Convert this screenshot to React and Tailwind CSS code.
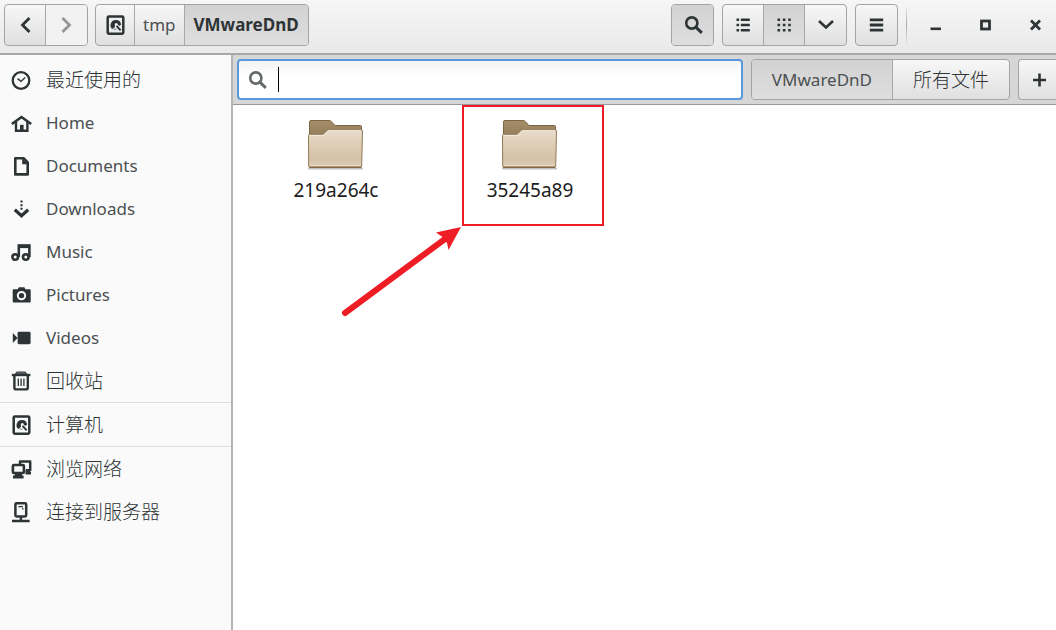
import React, { useState } from "react";

const Icon = ({ children, size = 24, className = "" }) => (
  <svg
    width={size}
    height={size}
    viewBox="0 0 24 24"
    fill="none"
    stroke="currentColor"
    strokeWidth="2.6"
    aria-hidden="true"
    className={`shrink-0 ${className}`}
  >
    {children}
  </svg>
);

const ClockIcon = () => (
  <Icon>
    <circle cx="12" cy="12.5" r="8.3" strokeWidth="2.3" />
    <path d="M8.6 10.6 12 13.4 16.2 9.6" strokeWidth="1.4" />
  </Icon>
);

const HomeIcon = () => (
  <Icon>
    <path d="M2.8 13 12.5 6l9.7 7" strokeWidth="2.6" />
    <path d="M7 11v8.7h11.4V11" strokeWidth="2.4" />
    <path d="M11 20v-6.2h3.6V20z" fill="currentColor" stroke="none" />
  </Icon>
);

const DocumentIcon = () => (
  <Icon>
    <path d="M6.3 4.2h8.2l4.2 4.2v12H6.3z" strokeLinejoin="round" />
    <path d="M13.2 4v6.2H19z" fill="currentColor" stroke="none" />
  </Icon>
);

const DownloadIcon = () => (
  <Icon>
    <path d="M12.5 3.6v10" strokeWidth="2.2" strokeDasharray="2 1.6" />
    <path d="M5.8 12.8l6.7 6 6.7-6" strokeWidth="3.2" />
  </Icon>
);

const MusicIcon = () => (
  <Icon>
    <circle cx="6.2" cy="17" r="2.8" />
    <circle cx="16.8" cy="17" r="2.8" />
    <path d="M9.8 17V5.6h10.6V17" />
    <path d="M9 6.4h12" strokeWidth="3.4" />
  </Icon>
);

const CameraIcon = () => (
  <Icon>
    <path
      d="M4.7 6.2h4l1.2-2h5.4l1.2 2h4.2q1 0 1 1v11.4q0 1-1 1h-16q-1 0-1-1V7.2q0-1 1-1z"
      fill="currentColor"
      stroke="none"
    />
    <circle cx="12.5" cy="12.6" r="3.7" stroke="#fafafa" strokeWidth="2" />
  </Icon>
);

const VideoIcon = () => (
  <Icon>
    <rect x="8.6" y="5.8" width="13" height="12.4" rx="1.4" fill="currentColor" stroke="none" />
    <path d="M3.8 7l4.8 5-4.8 5z" fill="currentColor" stroke="none" />
  </Icon>
);

const TrashIcon = () => (
  <Icon>
    <path d="M2.8 6h18.6" strokeWidth="2.4" />
    <path d="M6.5 5l1.2-2h8.6l1.2 2z" fill="currentColor" fillOpacity="0.6" strokeWidth="1" />
    <path d="M5.4 7v11.8q0 1.6 1.6 1.6h10.2q1.600 0 1.600-1.600V7" strokeWidth="2.4" />
    <path d="M9.3 9.5v7.5M12.1 9.500v7.500M14.900 9.500v7.500" strokeWidth="1.3" />
  </Icon>
);

const DiskIcon = () => (
  <Icon>
    <rect x="4.7" y="3.4" width="15.6" height="17.400" rx="1.2" strokeWidth="2.5" />
    <path d="M13 7a5.200 5.200 0 0 0-3.800 9l2.300-1.600 1.100-3.200 4.200 1.600 1.300-1.400A5.200 5.200 0 0 0 13 7z" fill="currentColor" stroke="none" />
    <circle cx="13.300" cy="11.400" r="1.500" fill="#f4f4f4" stroke="none" />
    <path d="M13.600 12.800l4 4.600" strokeWidth="1.900" />
    <path d="M10.600 16.200h3" strokeWidth="1" strokeOpacity="0.6" />
  </Icon>
);

const NetworkIcon = () => (
  <Icon>
    <path d="M11 7V4.600h10.200v8.600H17" strokeWidth="2.500" strokeLinejoin="round" />
    <path d="M16.500 13h4.500v2h1v2.600h-5.500z" fill="currentColor" stroke="none" />
    <rect x="3.900" y="8" width="11" height="8" rx="1" strokeWidth="2.600" />
    <path d="M5.800 17h7.200v1.600h1.600v2.800H4v-2.800h1.800z" fill="currentColor" stroke="none" />
  </Icon>
);

const ServerIcon = () => (
  <Icon>
    <rect x="6.400" y="3.300" width="10.800" height="13.200" rx="1.200" strokeWidth="2.500" />
    <path d="M9.400 6.700h4.600M13 8.800h1.600" strokeWidth="1.200" />
    <path d="M11.900 17v4M3 21h17.600" strokeWidth="2.400" />
  </Icon>
);

const SearchIcon = () => (
  <Icon>
    <circle cx="10.8" cy="10" r="5.6" />
    <path d="M14.8 14.2l6 5.6" strokeWidth="3" />
  </Icon>
);

const FolderIcon = () => (
  <svg width="60" height="54" viewBox="1 0 60 54" aria-hidden="true">
    <defs>
      <linearGradient id="folderFront" x1="0" y1="0" x2="0" y2="1">
        <stop offset="0" stopColor="#e8dccb" />
        <stop offset="0.75" stopColor="#d5c2a6" />
        <stop offset="1" stopColor="#dccdb6" />
      </linearGradient>
      <linearGradient id="folderBack" x1="0" y1="0" x2="0" y2="1">
        <stop offset="0" stopColor="#a58d69" />
        <stop offset="1" stopColor="#86704e" />
      </linearGradient>
    </defs>
    <path d="M4 48.500h53" stroke="#000" strokeOpacity="0.25" strokeWidth="2" strokeLinecap="round" />
    <path
      d="M4.500 2q0-1.500 1.500-1.500h18q1.500 0 2.500 1.200l3.500 3.800h25.500q1 0 1 1V30h-52z"
      fill="url(#folderBack)"
      stroke="#7d6544"
    />
    <path
      d="M3.500 15.500q0-1.200 1.200-1.200h12.800q1.200 0 2-1l2.500-2.500q.8-1 2-1h32.300q1.200 0 1.200 1.200l-.8 35q0 1.500-1.500 1.500h-50q-1.500 0-1.500-1.500z"
      fill="url(#folderFront)"
      stroke="#937a56"
    />
    <path d="M5 45.500h50.500" stroke="#eee4d6" strokeOpacity="0.7" />
    <path d="M4.500 47.200h51.500" stroke="#86693f" strokeWidth="1.500" />
    <path d="M4.800 15.500h13.500l4.500-4.700h33" fill="none" stroke="#f4ece0" strokeWidth="1" />
  </svg>
);

const groupClass =
  "flex shrink-0 divide-x divide-[#a8a8a8] overflow-hidden rounded-[4px] border border-[#a3a5a3] bg-linear-to-b from-[#f7f7f7] to-[#e0e0e0]";
const activeClass = "bg-linear-to-b from-[#d2d2d2] to-[#dedede]";
const iconButton = "flex w-[41px] items-center justify-center";

const places = [
  [
    { label: "最近使用的", icon: ClockIcon, cjk: true },
    { label: "Home", icon: HomeIcon },
    { label: "Documents", icon: DocumentIcon },
    { label: "Downloads", icon: DownloadIcon },
    { label: "Music", icon: MusicIcon },
    { label: "Pictures", icon: CameraIcon },
    { label: "Videos", icon: VideoIcon },
    { label: "回收站", icon: TrashIcon, cjk: true },
  ],
  [{ label: "计算机", icon: DiskIcon, cjk: true }],
  [
    { label: "浏览网络", icon: NetworkIcon, cjk: true },
    { label: "连接到服务器", icon: ServerIcon, cjk: true },
  ],
];

const folders = ["219a264c", "35245a89"];

const HeaderBar = () => (
  <header className="flex h-[55px] items-start border-b-2 border-[#a8a8a8] bg-linear-to-b from-[#f6f6f6] to-[#e9e9e9] pt-1 pl-1">
    <nav className={`${groupClass} h-[42px]`}>
      <button aria-label="Back" className={iconButton}>
        <Icon>
          <path d="M16.5 5L9.5 12l7 7" strokeWidth="2.8" />
        </Icon>
      </button>
      <button aria-label="Forward" className={`${iconButton} bg-[#f2f2f2] text-[#949796]`}>
        <Icon>
          <path d="M7.5 5l7 7-7 7" strokeWidth="2.8" />
        </Icon>
      </button>
    </nav>

    <nav className={`${groupClass} ml-[7px] h-[42px]`}>
      <button aria-label="Computer" className="flex items-center px-[7px]">
        <DiskIcon />
      </button>
      <button className="px-2 text-[#4b5052]">tmp</button>
      <button className={`${activeClass} px-[9px] font-bold`}>VMwareDnD</button>
    </nav>

    <div className="ml-auto flex h-[42px] gap-2">
      <div className={groupClass}>
        <button aria-label="Search" className={`${iconButton} ${activeClass}`}>
          <SearchIcon />
        </button>
      </div>
      <div className={groupClass}>
        <button aria-label="List view" className={iconButton}>
          <Icon>
            <path d="M5.5 6.8h2.6M5.5 12h2.6M5.5 17.2h2.6M9.8 6.8h9M9.8 12h9M9.8 17.2h9" />
          </Icon>
        </button>
        <button aria-label="Grid view" className={`${iconButton} ${activeClass}`}>
          <Icon>
            <path
              d="M5.5 6.800h13.500M5.500 12h13.500M5.500 17.200h13.500"
              strokeWidth="2.400"
              strokeDasharray="2.600 2.750"
            />
          </Icon>
        </button>
        <button aria-label="View options" className={iconButton}>
          <Icon>
            <path d="M5 8l7 6.500L19 8" strokeWidth="2.600" />
          </Icon>
        </button>
      </div>
      <div className={groupClass}>
        <button aria-label="Menu" className={iconButton}>
          <Icon>
            <path d="M4.800 6.800h13.400M4.800 12h13.400M4.800 17.200h13.400" strokeWidth="2.800" />
          </Icon>
        </button>
      </div>
    </div>

    <div className="ml-2 h-[42px] w-px bg-linear-to-b from-transparent via-[#a8a8a8] to-transparent" />
    <div className="ml-[9px] flex h-[42px] gap-[10px]">
      <button aria-label="Minimize" className="flex w-10 items-center justify-center">
        <Icon>
          <path d="M6.500 15.800h10.500" />
        </Icon>
      </button>
      <button aria-label="Maximize" className="flex w-10 items-center justify-center">
        <Icon>
          <rect x="7.500" y="8" width="8" height="8" strokeWidth="2.800" />
        </Icon>
      </button>
      <button aria-label="Close" className="flex w-10 items-center justify-center">
        <Icon>
          <path d="M7 7.500l9 9M16 7.500l-9 9" strokeWidth="2.800" />
        </Icon>
      </button>
    </div>
  </header>
);

const Sidebar = () => (
  <aside className="w-[233px] shrink-0 border-r-2 border-[#b4b4b4] bg-[#fafafa] pt-[3px]">
    {places.map((section, i) => (
      <ul key={i} className={i > 0 ? "border-t border-[#dedede]" : ""}>
        {section.map(({ label, icon: PlaceIcon, cjk }) => (
          <li key={label}>
            <a href="#" className="flex h-[43px] items-center gap-[13px] pl-[9px]">
              <PlaceIcon />
              <span className={cjk ? "text-[19px] font-light" : "text-[#4b5052]"}>{label}</span>
            </a>
          </li>
        ))}
      </ul>
    ))}
  </aside>
);

const SearchBar = ({ query, setQuery }) => (
  <div className="flex h-[50px] gap-2 overflow-hidden border-b border-[#999] bg-[#d6d6d6] pt-1 pb-1 pl-1">
    <label className="flex flex-1 items-center rounded-[4px] border-2 border-[#5a98dd] bg-linear-to-b from-[#f3f3f3] to-white to-40% pl-[6px]">
      <span className="text-[#666a6b]">
        <SearchIcon />
      </span>
      {!query && <span className="ml-[9px] h-[25px] w-px bg-black" />}
      <input
        type="text"
        aria-label="Search files"
        value={query}
        onChange={(e) => setQuery(e.target.value)}
        className="min-w-0 flex-1 bg-transparent px-1 outline-none"
      />
    </label>
    <div className={groupClass}>
      <button className={`${activeClass} px-5 text-[#4b5052]`}>VMwareDnD</button>
      <button className="px-5 text-[19px] font-light">所有文件</button>
    </div>
    <button
      aria-label="Add filter"
      className="flex w-[38px] shrink-0 items-center justify-center rounded-l-[4px] border border-r-0 border-[#a3a5a3] bg-linear-to-b from-[#f7f7f7] to-[#e0e0e0] pl-1"
    >
      <Icon>
        <path d="M11.500 5.500v13M5 12h13" />
      </Icon>
    </button>
  </div>
);

const App = () => {
  const [query, setQuery] = useState("");

  return (
    <div className="flex min-h-screen flex-col bg-white font-['Noto_Sans','Noto_Sans_CJK_SC',sans-serif] text-[17px] leading-6 text-[#2e3436]">
      <HeaderBar />
      <div className="flex flex-1">
        <Sidebar />
        <main className="flex min-w-0 flex-1 flex-col">
          <SearchBar query={query} setQuery={setQuery} />
          <div className="relative flex flex-1 items-start pt-[15px] pl-[6px]">
            {folders.map((name) => (
              <button key={name} className="flex w-[194px] flex-col items-center gap-1 text-[19px] text-[#1c1c1c]">
                <FolderIcon />
                {name}
              </button>
            ))}

            {/* Highlight box and pointer */}
            <div className="absolute top-0 left-[229px] h-[121px] w-[142px] border-2 border-[#ee1c25]" />
            <svg
              width="130"
              height="100"
              viewBox="0 0 130 100"
              className="absolute top-[115px] left-[105px]"
              aria-hidden="true"
            >
              <path d="M7 93L109 17.500" stroke="#ee1c25" strokeWidth="6" strokeLinecap="round" />
              <path d="M123 7L98 12.500l6.500 4.500 4.500 6 1.500 7z" fill="#ee1c25" />
            </svg>
          </div>
        </main>
      </div>
    </div>
  );
};

export default App;
